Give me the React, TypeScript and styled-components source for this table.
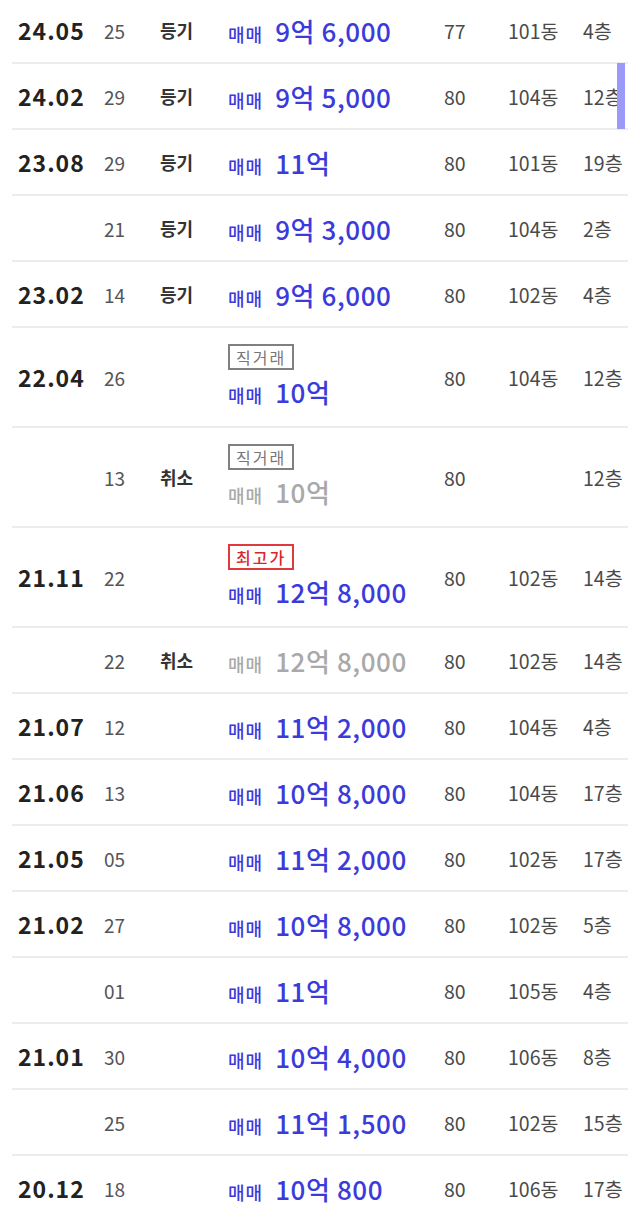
import React from "react";
import styled, { createGlobalStyle } from "styled-components";

const GlobalStyle = createGlobalStyle`
  html, body {
    margin: 0;
    padding: 0;
    background: #fff;
  }
  body {
    font-family: "Noto Sans CJK KR", "Noto Sans", sans-serif;
    color: #333;
    overflow: hidden;
  }
`;

const Table = styled.div`
  display: flex;
  flex-direction: column;
  padding: 0 12px;
  margin-top: -2px;
`;

const Row = styled.div<{ $tall?: boolean }>`
  position: relative;
  display: grid;
  grid-template-columns: 86px 56px 68px 216px 64px 75px 1fr;
  align-items: center;
  height: ${({ $tall }) => ($tall ? "98px" : "64px")};
  padding-left: 6px;
  border-bottom: 2px solid #ececec;
`;

const DateCell = styled.div`
  font-size: 23px;
  font-weight: 700;
  color: #222;
  letter-spacing: 1px;
`;

const DayCell = styled.div`
  font-size: 19px;
  color: #555;
`;

const StatusCell = styled.div`
  font-size: 18px;
  font-weight: 700;
  color: #333;
`;

const PriceCell = styled.div`
  display: flex;
  flex-direction: column;
  align-items: flex-start;
  gap: 3px;
`;

const Badge = styled.span<{ $red?: boolean }>`
  display: inline-block;
  font-size: 16px;
  line-height: 20px;
  padding: 1px 6px;
  letter-spacing: 2px;
  border: 2px solid ${({ $red }) => ($red ? "#e0393c" : "#808080")};
  color: ${({ $red }) => ($red ? "#d8262b" : "#777")};
  font-weight: ${({ $red }) => ($red ? 500 : 400)};
  background: #fff;
`;

const Price = styled.div<{ $cancel?: boolean }>`
  display: flex;
  align-items: baseline;
  gap: 12px;
  color: ${({ $cancel }) => ($cancel ? "#a9a9a9" : "#3b3bdc")};
  font-weight: 500;
  white-space: nowrap;
`;

const DealType = styled.span`
  font-size: 18px;
  letter-spacing: 1px;
`;

const Amount = styled.span`
  font-size: 26px;
  letter-spacing: 0.6px;
`;

const InfoCell = styled.div`
  font-size: 19.5px;
  color: #4a4a4a;
  white-space: nowrap;
`;

const ScrollMark = styled.div`
  position: absolute;
  right: 3px;
  top: -1px;
  bottom: -1px;
  width: 8px;
  background: #9a9af8;
`;

type Deal = {
  date?: string;
  day: string;
  status?: string;
  badge?: { text: string; red?: boolean };
  price: string;
  cancel?: boolean;
  area: string;
  dong?: string;
  floor: string;
  marked?: boolean;
};

const deals: Deal[] = [
  { date: "24.05", day: "25", status: "등기", price: "9억 6,000", area: "77", dong: "101동", floor: "4층" },
  { date: "24.02", day: "29", status: "등기", price: "9억 5,000", area: "80", dong: "104동", floor: "12층", marked: true },
  { date: "23.08", day: "29", status: "등기", price: "11억", area: "80", dong: "101동", floor: "19층" },
  { day: "21", status: "등기", price: "9억 3,000", area: "80", dong: "104동", floor: "2층" },
  { date: "23.02", day: "14", status: "등기", price: "9억 6,000", area: "80", dong: "102동", floor: "4층" },
  { date: "22.04", day: "26", badge: { text: "직거래" }, price: "10억", area: "80", dong: "104동", floor: "12층" },
  { day: "13", status: "취소", badge: { text: "직거래" }, price: "10억", cancel: true, area: "80", floor: "12층" },
  { date: "21.11", day: "22", badge: { text: "최고가", red: true }, price: "12억 8,000", area: "80", dong: "102동", floor: "14층" },
  { day: "22", status: "취소", price: "12억 8,000", cancel: true, area: "80", dong: "102동", floor: "14층" },
  { date: "21.07", day: "12", price: "11억 2,000", area: "80", dong: "104동", floor: "4층" },
  { date: "21.06", day: "13", price: "10억 8,000", area: "80", dong: "104동", floor: "17층" },
  { date: "21.05", day: "05", price: "11억 2,000", area: "80", dong: "102동", floor: "17층" },
  { date: "21.02", day: "27", price: "10억 8,000", area: "80", dong: "102동", floor: "5층" },
  { day: "01", price: "11억", area: "80", dong: "105동", floor: "4층" },
  { date: "21.01", day: "30", price: "10억 4,000", area: "80", dong: "106동", floor: "8층" },
  { day: "25", price: "11억 1,500", area: "80", dong: "102동", floor: "15층" },
  { date: "20.12", day: "18", price: "10억 800", area: "80", dong: "106동", floor: "17층" },
];

export default function App() {
  return (
    <>
      <GlobalStyle />
      <Table>
        {deals.map((d, i) => (
          <Row key={i} $tall={!!d.badge}>
            <DateCell>{d.date}</DateCell>
            <DayCell>{d.day}</DayCell>
            <StatusCell>{d.status}</StatusCell>
            <PriceCell>
              {d.badge && <Badge $red={d.badge.red}>{d.badge.text}</Badge>}
              <Price $cancel={d.cancel}>
                <DealType>매매</DealType>
                <Amount>{d.price}</Amount>
              </Price>
            </PriceCell>
            <InfoCell>{d.area}</InfoCell>
            <InfoCell>{d.dong}</InfoCell>
            <InfoCell>{d.floor}</InfoCell>
            {d.marked && <ScrollMark />}
          </Row>
        ))}
      </Table>
    </>
  );
}
